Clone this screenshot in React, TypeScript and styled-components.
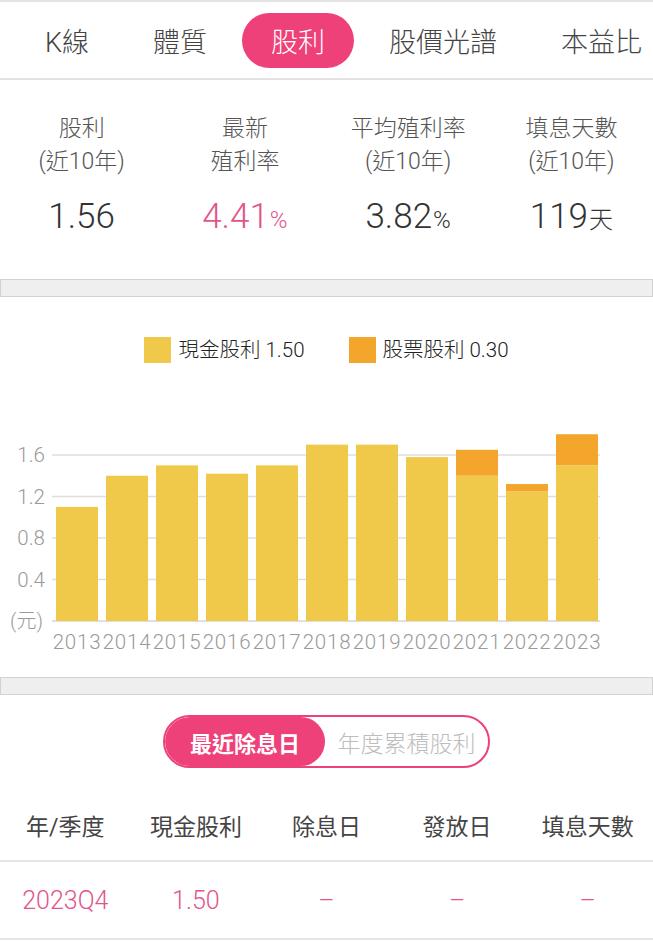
import styled, { createGlobalStyle } from "styled-components";

const PINK = "#ee4079";
const TEXT_PINK = "#e2558a";
const CASH = "#f0c94a";
const STOCK = "#f4a52b";
const FONT = `"Roboto", "Noto Sans CJK TC", sans-serif`;

const GlobalStyle = createGlobalStyle`
  html, body {
    margin: 0;
    padding: 0;
    background: #ffffff;
    overflow: hidden;
  }
  body {
    font-family: ${FONT};
    font-weight: 300;
    color: #333;
  }
`;

const tabs = ["K線", "體質", "股利", "股價光譜", "本益比"];

const stats = [
  { label: ["股利", "(近10年)"], value: "1.56", unit: "", pink: false },
  { label: ["最新", "殖利率"], value: "4.41", unit: "%", pink: true },
  { label: ["平均殖利率", "(近10年)"], value: "3.82", unit: "%", pink: false },
  { label: ["填息天數", "(近10年)"], value: "119", unit: "天", pink: false },
];

const years = [
  { year: "2013", cash: 1.1, stock: 0 },
  { year: "2014", cash: 1.4, stock: 0 },
  { year: "2015", cash: 1.5, stock: 0 },
  { year: "2016", cash: 1.42, stock: 0 },
  { year: "2017", cash: 1.5, stock: 0 },
  { year: "2018", cash: 1.7, stock: 0 },
  { year: "2019", cash: 1.7, stock: 0 },
  { year: "2020", cash: 1.58, stock: 0 },
  { year: "2021", cash: 1.4, stock: 0.25 },
  { year: "2022", cash: 1.25, stock: 0.07 },
  { year: "2023", cash: 1.5, stock: 0.3 },
];

const columns = ["年/季度", "現金股利", "除息日", "發放日", "填息天數"];
const rows = [["2023Q4", "1.50", "–", "–", "–"]];

// chart geometry (svg coords)
const BASE = 201;
const UNIT = 103.75;
const ticks = [0.4, 0.8, 1.2, 1.6];

function DividendChart() {
  return (
    <ChartSvg width={653} height={257} viewBox="0 0 653 257">
      {ticks.map((t) => (
        <g key={t}>
          <line x1={52} x2={600} y1={BASE - t * UNIT} y2={BASE - t * UNIT} stroke="#dedede" strokeWidth={1.5} />
          <text x={45} y={BASE - t * UNIT + 7} textAnchor="end" fontSize={20.5} fill="#9a9a9a">
            {t.toFixed(1)}
          </text>
        </g>
      ))}
      <line x1={52} x2={600} y1={BASE} y2={BASE} stroke="#d6d6d6" strokeWidth={1.5} />
      <text x={43} y={BASE + 7} textAnchor="end" fontSize={20} fill="#9a9a9a">
        (元)
      </text>
      {years.map((d, i) => {
        const x = 56 + i * 50;
        const cashH = d.cash * UNIT;
        const stockH = d.stock * UNIT;
        return (
          <g key={d.year}>
            <rect x={x} y={BASE - cashH} width={42} height={cashH} fill={CASH} />
            {d.stock > 0 && (
              <rect x={x} y={BASE - cashH - stockH} width={42} height={stockH} fill={STOCK} />
            )}
            <text
              x={x + 21}
              y={BASE + 28}
              textAnchor="middle"
              fontSize={20.5}
              letterSpacing={0.8}
              fill="#9a9a9a"
            >
              {d.year}
            </text>
          </g>
        );
      })}
    </ChartSvg>
  );
}

function App() {
  return (
    <Page>
      <GlobalStyle />
      <TabBar>
        {tabs.map((t) => (
          <Tab key={t} $active={t === "股利"}>
            {t}
          </Tab>
        ))}
      </TabBar>

      <StatsRow>
        {stats.map((s) => (
          <StatCell key={s.value}>
            <StatLabel>
              {s.label[0]}
              <br />
              {s.label[1]}
            </StatLabel>
            <StatValue $pink={s.pink}>
              {s.value}
              {s.unit && <Unit>{s.unit}</Unit>}
            </StatValue>
          </StatCell>
        ))}
      </StatsRow>

      <Divider />

      <ChartSection>
        <Legend>
          <LegendItem>
            <Swatch $color={CASH} />
            現金股利 1.50
          </LegendItem>
          <LegendItem>
            <Swatch $color={STOCK} />
            股票股利 0.30
          </LegendItem>
        </Legend>
        <DividendChart />
      </ChartSection>

      <Divider />

      <ToggleWrap>
        <Toggle>
          <ToggleOption $active>最近除息日</ToggleOption>
          <ToggleOption>年度累積股利</ToggleOption>
        </Toggle>
      </ToggleWrap>

      <TableHead>
        {columns.map((c) => (
          <HeadCell key={c}>{c}</HeadCell>
        ))}
      </TableHead>
      {rows.map((r) => (
        <TableRow key={r[0]}>
          {r.map((v, i) => (
            <DataCell key={i}>{v}</DataCell>
          ))}
        </TableRow>
      ))}
    </Page>
  );
}

export default App;

const Page = styled.div`
  width: 653px;
  background: #fff;
`;

const TabBar = styled.div`
  height: 76px;
  display: flex;
  align-items: center;
  gap: 6px;
  padding-left: 16px;
  border-top: 2px solid #e4e4e4;
  border-bottom: 2px solid #e2e2e2;
  overflow: hidden;
  white-space: nowrap;
`;

const Tab = styled.div<{ $active?: boolean }>`
  flex: none;
  height: 55px;
  padding: 0 29px;
  display: flex;
  align-items: center;
  border-radius: 28px;
  font-size: 27px;
  color: ${(p) => (p.$active ? "#fff" : "#444")};
  background: ${(p) => (p.$active ? PINK : "transparent")};
`;

const StatsRow = styled.div`
  height: 199px;
  box-sizing: border-box;
  padding-top: 32px;
  display: grid;
  grid-template-columns: repeat(4, 1fr);
`;

const StatCell = styled.div`
  display: flex;
  flex-direction: column;
  align-items: center;
  gap: 19px;
`;

const StatLabel = styled.div`
  font-size: 23px;
  line-height: 33px;
  color: #555;
  text-align: center;
`;

const StatValue = styled.div<{ $pink?: boolean }>`
  font-size: 35px;
  line-height: 40px;
  color: ${(p) => (p.$pink ? TEXT_PINK : "#333")};
`;

const Unit = styled.span`
  font-size: 24px;
  margin-left: 1px;
`;

const Divider = styled.div`
  height: 16px;
  background: #efefef;
  border: 1px solid #d2d2d2;
`;

const ChartSection = styled.div`
  padding-top: 40px;
  display: flex;
  flex-direction: column;
`;

const Legend = styled.div`
  display: flex;
  justify-content: center;
  gap: 44px;
`;

const LegendItem = styled.div`
  display: flex;
  align-items: center;
  gap: 7px;
  font-size: 20.5px;
  line-height: 26px;
  color: #222;
`;

const Swatch = styled.span<{ $color: string }>`
  width: 27px;
  height: 26px;
  background: ${(p) => p.$color};
`;

const ChartSvg = styled.svg`
  display: block;
  margin-top: 57px;
  font-family: ${FONT};
  font-weight: 300;
`;

const ToggleWrap = styled.div`
  display: flex;
  justify-content: center;
  padding: 20px 0 22px;
`;

const Toggle = styled.div`
  width: 327px;
  height: 53px;
  box-sizing: border-box;
  display: flex;
  border: 2px solid ${PINK};
  border-radius: 27px;
  overflow: hidden;
`;

const ToggleOption = styled.div<{ $active?: boolean }>`
  flex: ${(p) => (p.$active ? "0 0 160px" : "1")};
  display: flex;
  align-items: center;
  justify-content: center;
  border-radius: 27px;
  font-size: ${(p) => (p.$active ? "22px" : "23px")};
  font-weight: ${(p) => (p.$active ? 700 : 300)};
  color: ${(p) => (p.$active ? "#fff" : "#bdbdbd")};
  background: ${(p) => (p.$active ? PINK : "transparent")};
`;

const TableHead = styled.div`
  height: 70px;
  display: grid;
  grid-template-columns: repeat(5, 1fr);
  align-items: center;
  border-bottom: 2px solid #e6e6e6;
`;

const HeadCell = styled.div`
  text-align: center;
  font-size: 23px;
  font-weight: 400;
  color: #444;
`;

const TableRow = styled.div`
  height: 76px;
  display: grid;
  grid-template-columns: repeat(5, 1fr);
  align-items: center;
  border-bottom: 2px solid #e6e6e6;
`;

const DataCell = styled.div`
  text-align: center;
  font-size: 25px;
  color: ${TEXT_PINK};
`;
